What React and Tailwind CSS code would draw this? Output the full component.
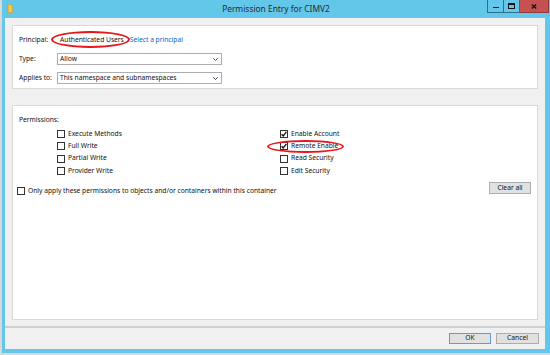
import React from "react";

function Box({ checked }) {
  return (
    <span className="w-[8px] h-[8px] border border-[#333333] bg-white flex items-center justify-center shrink-0">
      {checked && (
        <svg width="6" height="6" viewBox="0 0 6 6">
          <path d="M0.6 3.2 L2.2 5 L5.4 0.8" stroke="#111" strokeWidth="1.3" fill="none" />
        </svg>
      )}
    </span>
  );
}

function Check({ label, checked }) {
  return (
    <div className="h-[12.3px] flex items-center gap-[3px]">
      <Box checked={checked} />
      <span>{label}</span>
    </div>
  );
}

function Select({ value }) {
  return (
    <div className="w-[165px] h-[12px] border border-[#abadb3] bg-white flex items-center justify-between pl-[2px] pr-[3px]">
      <span>{value}</span>
      <svg width="5" height="3" viewBox="0 0 5 3">
        <path d="M0.3 0.3 L2.5 2.5 L4.7 0.3" stroke="#333" strokeWidth="0.9" fill="none" />
      </svg>
    </div>
  );
}

export default function App() {
  return (
    <div className="w-[550px] h-[355px] bg-[#d9d9d9] pl-[2px] pb-[2px] font-['Noto_Sans',sans-serif] text-[6.7px] text-[#111111] leading-none">
      <div className="h-full bg-[#63c7ea] flex flex-col">
        <div className="h-[18px] relative flex items-start justify-end pr-[1px] shrink-0">
          <svg className="absolute left-[5px] top-[4px]" width="6" height="9" viewBox="0 0 6 9">
            <path d="M0.5 0.5 H3.5 L5.5 2.5 V8.5 H0.5 Z" fill="#f2c94c" stroke="#c9982a" strokeWidth="0.6" />
            <path d="M1.5 0.5 V8.5" stroke="#e0b040" strokeWidth="0.8" />
          </svg>
          <div className="absolute inset-x-0 top-0 h-[18px] flex items-center justify-center text-[8.4px] text-[#2b2b2b]">
            Permission Entry for CIMV2
          </div>
          <div className="relative flex h-[13px]">
            <div className="w-[17px] h-full border border-[#2e6f8a] border-t-0 flex items-center justify-center">
              <span className="w-[6px] h-[1.5px] bg-[#222] mt-[3px]" />
            </div>
            <div className="w-[16px] h-full border border-[#2e6f8a] border-t-0 border-l-0 flex items-center justify-center">
              <span className="w-[7px] h-[6px] border border-[#111] border-t-2" />
            </div>
            <div className="w-[29px] h-full bg-[#c75050] border border-[#8a3a3a] border-t-0 border-l-0 flex items-center justify-center">
              <svg width="6" height="5" viewBox="0 0 6 5">
                <path d="M0.8 0.5 L5.2 4.5 M5.2 0.5 L0.8 4.5" stroke="#111" strokeWidth="1.3" />
              </svg>
            </div>
          </div>
        </div>
        <div className="flex-1 flex flex-col pl-[3px] pr-[5px] pb-[4px]">
          <div className="flex-1 bg-[#f0f0f0] flex flex-col">
            <div className="px-[7px] pt-[7px]">
              <div className="relative h-[64px] border border-[#d9d9d9] bg-white pl-[6px] pt-[8px] flex flex-col gap-[7px]">
                <div className="h-[12px] flex items-center">
                  <span className="w-[41px]">Principal:</span>
                  <span>Authenticated Users</span>
                  <span className="ml-[6px] text-[#0066cc]">Select a principal</span>
                </div>
                <div className="flex items-center">
                  <span className="w-[38px]">Type:</span>
                  <Select value="Allow" />
                </div>
                <div className="flex items-center">
                  <span className="w-[38px]">Applies to:</span>
                  <Select value="This namespace and subnamespaces" />
                </div>
                <span className="absolute left-[38px] top-[5px] w-[79px] h-[17px] rounded-[50%] border-2 border-[#e8151a]" />
              </div>
              <div className="relative mt-[16px] h-[215px] border border-[#d9d9d9] bg-white pl-[4px] pr-[6px] pt-[9px] flex flex-col">
                <div className="h-[10px] flex items-center pl-[2px]">Permissions:</div>
                <div className="mt-[3px] ml-[40px] grid grid-cols-[223px_1fr]">
                  <div className="flex flex-col">
                    <Check label="Execute Methods" />
                    <Check label="Full Write" />
                    <Check label="Partial Write" />
                    <Check label="Provider Write" />
                  </div>
                  <div className="flex flex-col">
                    <Check label="Enable Account" checked />
                    <Check label="Remote Enable" checked />
                    <Check label="Read Security" />
                    <Check label="Edit Security" />
                  </div>
                </div>
                <div className="mt-[5px] flex justify-between items-start">
                  <div className="mt-[3px] h-[12px] flex items-center gap-[3px]">
                    <Box />
                    <span>Only apply these permissions to objects and/or containers within this container</span>
                  </div>
                  <div className="w-[42px] h-[12px] bg-[#e1e1e1] border border-[#adadad] flex items-center justify-center">
                    Clear all
                  </div>
                </div>
                <span className="absolute left-[254px] top-[34px] w-[77px] h-[13px] rounded-[50%] border-2 border-[#e8151a]" />
              </div>
            </div>
            <div className="mt-[6px] border-t-2 border-[#d0d0d0] flex justify-end gap-[5px] pr-[6px] pt-[5px]">
              <div className="w-[42px] h-[11px] bg-[#e1e1e1] border border-[#5b9fd6] flex items-center justify-center">OK</div>
              <div className="w-[43px] h-[11px] bg-[#e1e1e1] border border-[#adadad] flex items-center justify-center">Cancel</div>
            </div>
          </div>
        </div>
      </div>
    </div>
  );
}
